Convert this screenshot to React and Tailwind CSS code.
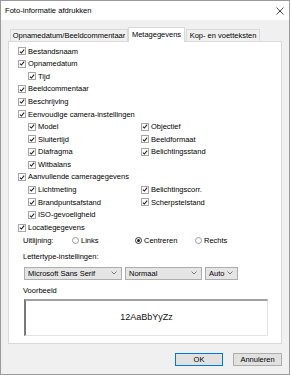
import React from 'react'

const LEFT_CAMERA = ['Model', 'Sluitertijd', 'Diafragma', 'Witbalans']
const RIGHT_CAMERA = ['Objectief', 'Beeldformaat', 'Belichtingsstand']
const LEFT_EXTRA = ['Lichtmeting', 'Brandpuntsafstand', 'ISO-gevoeligheid']
const RIGHT_EXTRA = ['Belichtingscorr.', 'Scherpstelstand']

function Check({ label, indent }) {
  return (
    <div className={`flex h-[12.6px] items-center ${indent ? 'pl-[10px]' : ''}`}>
      <span className="flex h-[8px] w-[8px] shrink-0 items-center justify-center border border-[#a6a6a6] bg-white">
        <svg width="7" height="7" viewBox="0 0 7 7">
          <path d="M1 3.6 L2.8 5.3 L6 1.3" fill="none" stroke="#222" strokeWidth="1.3" />
        </svg>
      </span>
      <span className="ml-[2px] whitespace-nowrap">{label}</span>
    </div>
  )
}

function Radio({ label, checked }) {
  return (
    <div className="flex items-center">
      <span className={`flex h-[7px] w-[7px] items-center justify-center rounded-full border bg-white ${checked ? 'border-[#333]' : 'border-[#999]'}`}>
        {checked && <span className="h-[3px] w-[3px] rounded-full bg-[#222]" />}
      </span>
      <span className="ml-[2px]">{label}</span>
    </div>
  )
}

function Select({ value, w }) {
  return (
    <div className={`${w} flex h-[13px] items-center justify-between border border-[#adadad] bg-[#e5e5e5] pl-[3px] pr-[4px]`}>
      <span className="whitespace-nowrap">{value}</span>
      <svg width="6" height="4" viewBox="0 0 6 4">
        <path d="M0.5 0.5 L3 3 L5.5 0.5" fill="none" stroke="#606060" strokeWidth="0.8" />
      </svg>
    </div>
  )
}

export default function App() {
  return (
    <div className="flex h-[375px] w-[290px] flex-col border border-[#9a9a9a] bg-[#f0f0f0] font-['Liberation_Sans',Arial,sans-serif] text-[7.5px] leading-none text-black">
      {/* Title bar */}
      <div className="flex h-[19px] shrink-0 items-center justify-between bg-white pl-[4px] pr-[5px]">
        <span className="text-[7.6px]">Foto-informatie afdrukken</span>
        <svg width="8" height="8" viewBox="0 0 8 8">
          <path d="M0.5 0.5 L7.5 7.5 M7.5 0.5 L0.5 7.5" stroke="#222" strokeWidth="0.8" />
        </svg>
      </div>

      <div className="flex flex-1 flex-col px-[7px]">
        {/* Tabs */}
        <div className="mt-[7px] flex h-[14px] items-end">
          <div className="ml-[2px] flex h-[12px] w-[118px] items-center justify-center border border-b-0 border-[#d9d9d9] bg-[#f0f0f0] whitespace-nowrap">
            Opnamedatum/Beeldcommentaar
          </div>
          <div className="relative z-10 -mb-px flex h-[15px] w-[57px] items-center justify-center border border-b-0 border-[#d9d9d9] bg-white whitespace-nowrap">
            Metagegevens
          </div>
          <div className="ml-[1px] flex h-[12px] w-[74px] items-center justify-center border border-b-0 border-[#d9d9d9] bg-[#f0f0f0] whitespace-nowrap">
            Kop- en voetteksten
          </div>
        </div>

        {/* Panel */}
        <div className="flex h-[303px] flex-col border border-[#d9d9d9] bg-white pl-[9px] pt-[3px]">
          <Check label="Bestandsnaam" />
          <Check label="Opnamedatum" />
          <Check label="Tijd" indent />
          <Check label="Beeldcommentaar" />
          <Check label="Beschrijving" />
          <Check label="Eenvoudige camera-instellingen" />
          <div className="flex">
            <div className="w-[123px]">
              {LEFT_CAMERA.map(l => <Check key={l} label={l} indent />)}
            </div>
            <div>
              {RIGHT_CAMERA.map(l => <Check key={l} label={l} />)}
            </div>
          </div>
          <Check label="Aanvullende cameragegevens" />
          <div className="flex">
            <div className="w-[123px]">
              {LEFT_EXTRA.map(l => <Check key={l} label={l} indent />)}
            </div>
            <div>
              {RIGHT_EXTRA.map(l => <Check key={l} label={l} />)}
            </div>
          </div>
          <Check label="Locatiegegevens" />

          {/* Alignment */}
          <div className="ml-[5px] flex h-[13px] items-center">
            <span className="w-[49px]">Uitlijning:</span>
            <div className="w-[63px]"><Radio label="Links" /></div>
            <div className="w-[60px]"><Radio label="Centreren" checked /></div>
            <Radio label="Rechts" />
          </div>

          <div className="ml-[5px] mt-[3px] flex h-[13px] items-center">Lettertype-instellingen:</div>

          <div className="ml-[6px] mt-[4px] flex gap-[3px]">
            <Select value="Microsoft Sans Serif" w="w-[98px]" />
            <Select value="Normaal" w="w-[77px]" />
            <Select value="Auto" w="w-[33px]" />
          </div>

          <div className="ml-[5px] mt-[4px] flex h-[13px] items-center">Voorbeeld</div>

          <div className="ml-[6px] mt-[2px] flex h-[37px] w-[244px] items-center justify-center border-b border-l-2 border-r border-t-2 border-b-[#e3e3e3] border-l-[#7a7a7a] border-r-[#e3e3e3] border-t-[#a0a0a0] bg-white text-[9px] text-[#111]">
            12AaBbYyZz
          </div>
        </div>

        {/* Buttons */}
        <div className="mt-[9px] flex justify-end gap-[10px]">
          <button className="flex h-[13px] w-[48px] items-center justify-center border border-[#0078d7] bg-[#e1e1e1]">OK</button>
          <button className="flex h-[13px] w-[49px] items-center justify-center border border-[#adadad] bg-[#e1e1e1]">Annuleren</button>
        </div>
      </div>
    </div>
  )
}
